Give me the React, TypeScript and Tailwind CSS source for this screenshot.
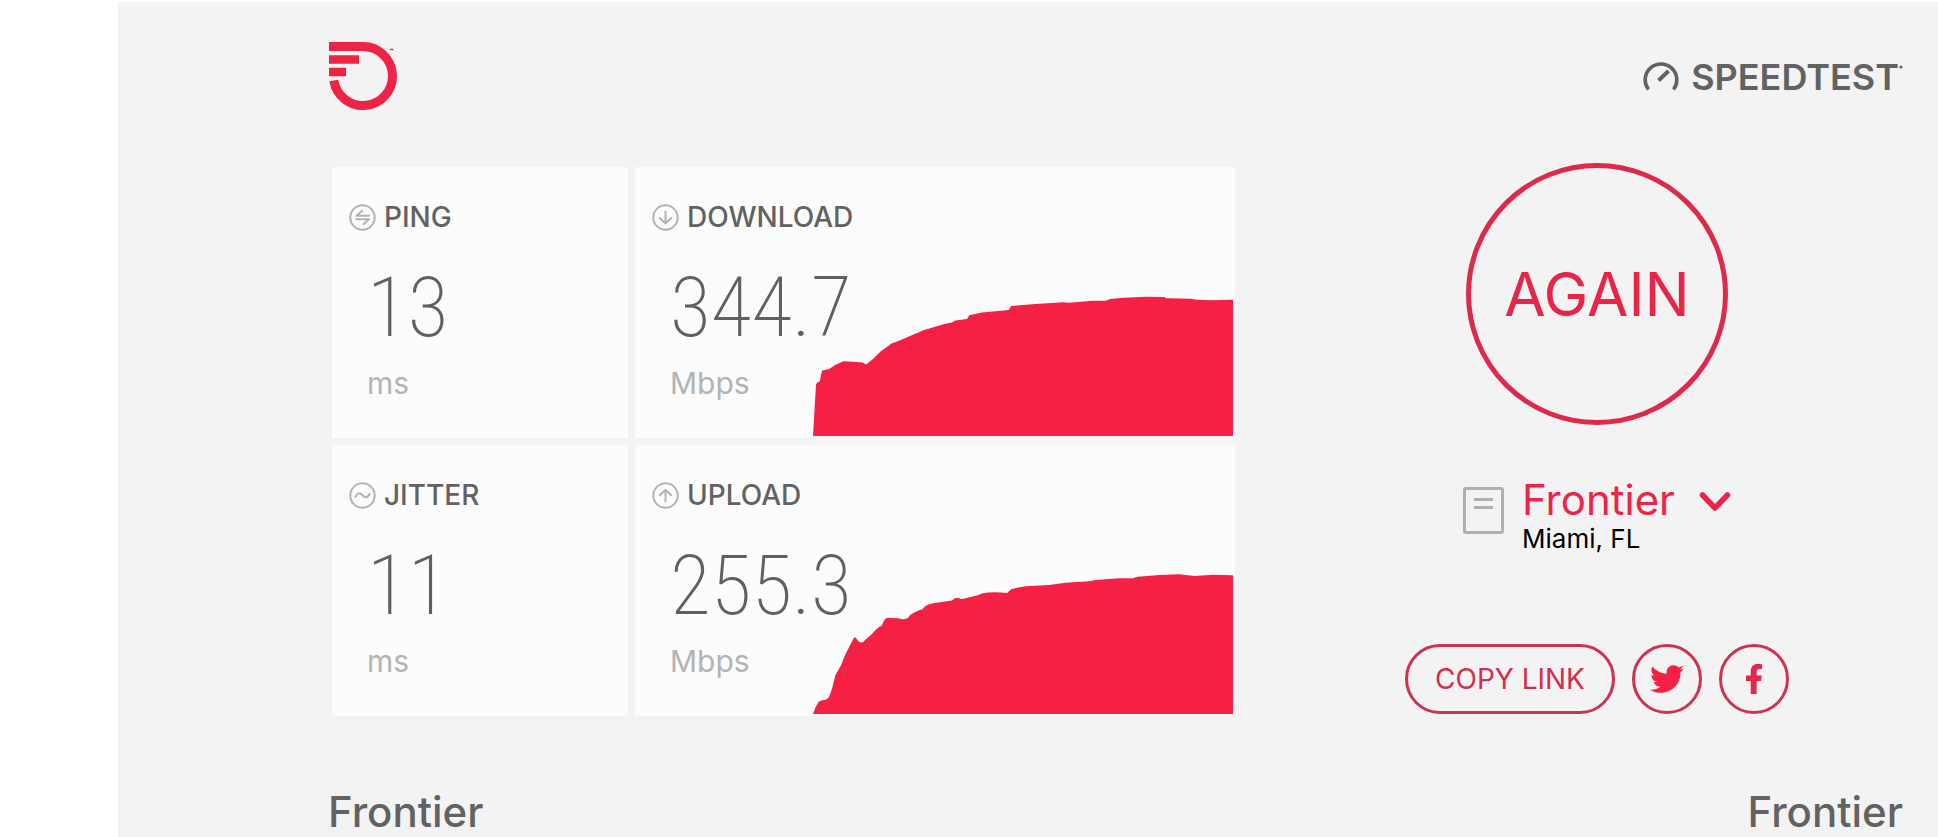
import type { ReactNode } from "react";
import { FaFacebookF, FaTwitter } from "react-icons/fa";

const DOWNLOAD_CURVE =
  "M45 467L54 312L58 306L65 303L72 270L92 266L112 253L136 242L165 244L193 246L204 252L225 235L246 214L280 189L300 181L375 149L435 131L460 126L470 120L505 115L512 104L550 96L630 88L637 76L700 71L790 65L810 66L880 60L920 60L932 55L975 51L1040 48L1095 49L1100 53L1175 54L1190 57L1240 59L1300 57V467Z";

const UPLOAD_CURVE =
  "M45 467L52 448L62 430L72 426Q88 426 94 414L102 390L112 350L128 322L142 287L165 242Q170 232 174 240L182 249Q192 257 200 245L222 226Q238 206 250 202L258 185Q263 177 272 178L300 179Q325 188 335 170Q348 160 372 152L380 143Q395 134 420 132L460 126L470 118L480 118L488 122L535 111L552 104Q580 99 625 103L638 91L680 83L750 79L800 72L870 68L890 64L960 59L1000 59L1015 54L1080 49L1140 47L1185 52L1240 48L1300 50V467Z";

function RoundIcon({ children }: { children: ReactNode }) {
  return (
    <svg viewBox="0 0 27 27" className="size-[27px] shrink-0" fill="none" stroke="#b3b3b3" strokeWidth="2" strokeLinecap="round" strokeLinejoin="round" aria-hidden="true">
      <circle cx="13.5" cy="13.5" r="12.2" />
      {children}
    </svg>
  );
}

type MetricProps = { label: string; value: string; unit: string; icon: ReactNode; curve?: string };

function Metric({ label, value, unit, icon, curve }: MetricProps) {
  return (
    <article className="relative h-[271px] bg-[#fcfcfc] pt-[34px]">
      {curve && (
        <svg viewBox="45 40 1255 427" preserveAspectRatio="none" className="absolute right-0.5 bottom-0.5 h-[142px] w-[70%]" fill="#f52044" aria-hidden="true">
          <path d={curve} />
        </svg>
      )}
      <h2 className="flex h-8 items-center gap-2 pl-[17px] text-[28px] font-medium text-[#626262]">
        <RoundIcon>{icon}</RoundIcon>
        {label}
      </h2>
      <p className="relative mt-[30px] pl-[35px] font-['Roboto_Condensed','Roboto',sans-serif] text-[84px] leading-[90px] font-extralight text-[#606060]">{value}</p>
      <p className="relative mt-3 pl-[35px] text-[30px] leading-9 text-[#b3b3b3]">{unit}</p>
    </article>
  );
}

function FrontierLogo() {
  return (
    <svg viewBox="0 0 70 70" className="size-[70px]" fill="none" stroke="#ee2346" strokeWidth="9" role="img" aria-label="Frontier">
      <path d="M1 5.5H35A29.5 29.5 0 1 1 5.8 39.5" />
      <path d="M1 18.5H31M1 31H18" strokeWidth="8.5" />
      <path d="M62 8.5H65.5" strokeWidth="1.4" />
    </svg>
  );
}

export default function App() {
  return (
    <div className="min-h-screen bg-white pt-0.5 pl-[118px] font-['Inter',sans-serif]">
      <main className="min-h-[835px] bg-[#f3f3f3] pr-[35px] pl-[210px]">
        <header className="flex h-[161px] items-start justify-between pt-[39px]">
          <FrontierLogo />
          <div className="mt-4 flex items-center gap-3 text-[#626262]">
            <svg viewBox="0 0 36 36" className="size-9" fill="none" stroke="currentColor" strokeWidth="3.6" aria-hidden="true">
              <path d="M5.5 30.5A15.8 15.8 0 1 1 30.5 30.5" />
              <path d="M15.5 21.5L25.5 12" strokeWidth="3.8" />
            </svg>
            <span className="flex text-[36px] leading-10 font-semibold">
              SPEEDTEST
              <svg viewBox="0 0 4 4" className="mt-2 size-1" fill="currentColor" aria-hidden="true"><circle cx="2" cy="2" r="1.6" /></svg>
            </span>
          </div>
        </header>

        <div className="grid grid-cols-[907fr_612fr] gap-14">
          <section className="grid grid-cols-[296fr_600fr] content-start gap-[7px] pt-1 pl-1" aria-label="Results">
            <Metric label="PING" value="13" unit="ms" icon={<path d="M20 11.8H7.5L13 6.8M7.5 15.3H20L14.5 20.3" />} />
            <Metric label="DOWNLOAD" value="344.7" unit="Mbps" curve={DOWNLOAD_CURVE} icon={<path d="M13.5 7.5V19.5M7.8 14L13.5 19.5L19.2 14" />} />
            <Metric label="JITTER" value="11" unit="ms" icon={<path d="M6.5 14.8C8.5 10.5 11 10.5 13.5 13.2S18.5 16.5 20.5 12" />} />
            <Metric label="UPLOAD" value="255.3" unit="Mbps" curve={UPLOAD_CURVE} icon={<path d="M13.5 19.5V7.8M7.8 13.3L13.5 7.8L19.2 13.3" />} />
          </section>

          <section className="flex flex-col items-center text-[#ec2449]" aria-label="Test controls">
            <button className="size-[262px] rounded-full border-5 border-[#dd2a4b] text-[60px] text-[#e62648]">AGAIN</button>

            <button className="mt-[50px] flex items-start text-left">
              <svg viewBox="0 0 41 47" className="mt-3 h-[47px] w-[41px]" fill="none" stroke="#b0b0b0" strokeWidth="3" aria-hidden="true">
                <rect x="1.5" y="1.5" width="38" height="44" rx="1.5" />
                <path d="M11 12.5H30M11 20.5H30" />
              </svg>
              <span className="ml-[18px] flex flex-col">
                <span className="text-[42px] leading-[50px]">Frontier</span>
                <span className="text-[26px] leading-7 text-black">Miami, FL</span>
              </span>
              <svg viewBox="0 0 32 22" className="mt-4 ml-6 h-[22px] w-8" fill="none" stroke="#ee2346" strokeWidth="5.5" strokeLinecap="round" strokeLinejoin="round" aria-hidden="true">
                <path d="M3.5 4L16 17L28.5 4" />
              </svg>
            </button>

            <div className="mt-[91px] flex gap-[17px]">
              <button className="h-[70px] w-[210px] rounded-full border-3 border-[#ce3152] text-[28px] text-[#d12f4e]">COPY LINK</button>
              <button aria-label="Share on Twitter" className="flex size-[70px] items-center justify-center rounded-full border-3 border-[#ce3152] text-[#f52044]">
                <FaTwitter className="size-[34px]" />
              </button>
              <button aria-label="Share on Facebook" className="flex size-[70px] items-center justify-center rounded-full border-3 border-[#ce3152] text-[#e62648]">
                <FaFacebookF className="size-[30px]" />
              </button>
            </div>
          </section>
        </div>

        <footer className="flex justify-between pt-[72px] text-[42px] leading-[48px] font-medium text-[#626262]">
          <span>Frontier</span>
          <span>Frontier</span>
        </footer>
      </main>
    </div>
  );
}
